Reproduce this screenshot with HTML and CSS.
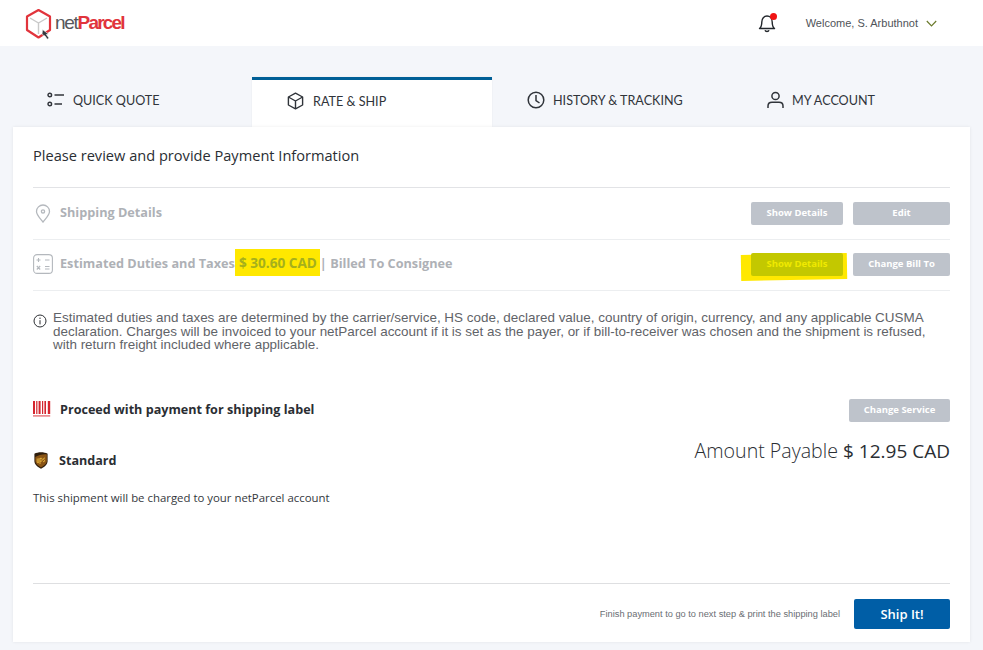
FILE: index.html
```html
<!DOCTYPE html>
<html lang="en">
<head>
  <meta charset="UTF-8" />
  <title>netParcel - Rate &amp; Ship</title>
  <link rel="stylesheet" href="styles.css">
</head>
<body>
  <header class="topbar">
    <a class="logo">
      <svg class="logo-mark" width="28" height="32" viewBox="0 0 28 32">
        <path d="M13.5 2 L25 8.5 V22 L13.5 29.5 L2 22 V8.5 Z" fill="none" stroke="#e1343c" stroke-width="2.2" stroke-linejoin="round"/>
        <path d="M5 10 L13.5 15 L22 10 M13.5 15 V26" fill="none" stroke="#c9c9c9" stroke-width="1.4"/>
        <path d="M17 26.5 L17.5 21.5 L23.5 26 L21.3 26.4 L24 30 L22.3 31.2 L20 28 Z" fill="#33373d" stroke="#fff" stroke-width=".6"/>
      </svg>
      <span class="logo-net">net</span><span class="logo-parcel">Parcel</span>
    </a>
    <div class="topbar-right">
      <span class="bell">
        <svg width="18" height="20" viewBox="0 0 18 20" fill="none" stroke="#23272c" stroke-width="1.4">
          <path d="M1.5 15.5 C3.5 14 3.8 12 3.8 9 C3.8 5.5 6 3 9 3 C12 3 14.2 5.5 14.2 9 C14.2 12 14.5 14 16.5 15.5 Z" stroke-linejoin="round"/>
          <path d="M7 17.3 C7.5 18.8 10.5 18.8 11 17.3"/>
        </svg>
        <i class="bell-dot"></i>
      </span>
      <span class="welcome">Welcome, S. Arbuthnot</span>
      <svg width="11" height="7" viewBox="0 0 11 7" fill="none" stroke="#6b7a2c" stroke-width="1.2"><path d="M.8 1 L5.5 5.8 L10.2 1"/></svg>
    </div>
  </header>

  <nav class="tabs">
    <div class="tab">
      <svg width="18" height="16" viewBox="0 0 18 16" fill="none" stroke="#30343a" stroke-width="1.4">
        <circle cx="2.8" cy="3" r="1.8"/><circle cx="2.8" cy="12" r="1.8"/>
        <path d="M7.5 3 H17 M7.5 12 H15"/>
      </svg>
      QUICK QUOTE
    </div>
    <div class="tab active">
      <svg width="17" height="18" viewBox="0 0 17 18" fill="none" stroke="#30343a" stroke-width="1.4" stroke-linejoin="round">
        <path d="M8.5 1.2 L15.6 5 V13 L8.5 16.8 L1.4 13 V5 Z"/>
        <path d="M1.4 5 L8.5 9 L15.6 5 M8.5 9 V16.8"/>
      </svg>
      RATE &amp; SHIP
    </div>
    <div class="tab">
      <svg width="18" height="18" viewBox="0 0 18 18" fill="none" stroke="#30343a" stroke-width="1.5">
        <circle cx="9" cy="9" r="7.8"/><path d="M9 4 V9.5 L12.5 12"/>
      </svg>
      HISTORY &amp; TRACKING
    </div>
    <div class="tab">
      <svg width="17" height="18" viewBox="0 0 17 18" fill="none" stroke="#30343a" stroke-width="1.5">
        <circle cx="8.5" cy="5" r="3.6"/><path d="M1 17 V15 C1 12.5 3 11.3 5 11.3 H12 C14 11.3 16 12.5 16 15 V17"/>
      </svg>
      MY ACCOUNT
    </div>
  </nav>

  <main class="card">
    <h1 class="page-title">Please review and provide Payment Information</h1>

    <div class="row">
      <div class="row-label">
        <svg class="row-icon" width="15" height="19" viewBox="0 0 15 19" fill="none" stroke="#b4b8bd" stroke-width="1.3">
          <path d="M7.5 18 C4 13.5 1 10.8 1 7.4 C1 3.8 4 1 7.5 1 C11 1 14 3.8 14 7.4 C14 10.8 11 13.5 7.5 18 Z"/>
          <circle cx="7.5" cy="7.4" r="1.6"/>
        </svg>
        <span class="row-text">Shipping Details</span>
      </div>
      <div class="row-actions">
        <button class="btn btn-details">Show Details</button>
        <button class="btn btn-side">Edit</button>
      </div>
    </div>

    <div class="row row-short">
      <div class="row-label">
        <svg class="row-icon" width="20" height="20" viewBox="0 0 20 20" fill="none" stroke="#b4b8bd" stroke-width="1.1">
          <rect x=".6" y=".6" width="18.8" height="18.8" rx="3.5"/>
          <path d="M3.5 6 H7.5 M5.5 4 V8 M12 6 H16.5 M3.8 12 L7.2 15.5 M7.2 12 L3.8 15.5 M12 12.5 H16.5 M12 15 H16.5"/>
        </svg>
        <span class="row-text">Estimated Duties and Taxes<mark class="marker-text">$ 30.60 CAD</mark>| Billed To Consignee</span>
      </div>
      <div class="row-actions">
        <span class="marker-btn"></span>
        <button class="btn btn-details btn-marked">Show Details</button>
        <button class="btn btn-side">Change Bill To</button>
      </div>
    </div>

    <div class="notice">
      <svg class="notice-icon" width="14" height="14" viewBox="0 0 14 14" fill="none" stroke="#2c2f33" stroke-width="1">
        <circle cx="7" cy="7" r="6"/><path d="M7 6.2 V10.4 M7 3.6 V5"/>
      </svg>
      <p>Estimated duties and taxes are determined by the carrier/service, HS code, declared value, country of origin, currency, and any applicable CUSMA declaration. Charges will be invoiced to your netParcel account if it is set as the payer, or if bill-to-receiver was chosen and the shipment is refused, with return freight included where applicable.</p>
    </div>

    <section class="payment">
      <div class="payment-left">
        <div class="proceed">
          <svg width="18" height="16" viewBox="0 0 18 16" fill="#d5262f">
            <rect x="0" y="0" width="2" height="13"/><rect x="3.2" y="0" width="1.2" height="13"/><rect x="5.6" y="0" width="2" height="13"/><rect x="9" y="0" width="1.2" height="13"/><rect x="11.4" y="0" width="1.6" height="13"/><rect x="14.8" y="0" width="2.4" height="13"/>
            <rect x="0" y="14.2" width="17.2" height="1.4" opacity=".65"/>
          </svg>
          Proceed with payment for shipping label
        </div>
        <div class="service">
          <svg class="ups" width="14" height="17" viewBox="0 0 14 17">
            <path d="M7 .3 C9.5 .3 11.8 .8 13.6 1.8 V9 C13.6 12.5 10.5 15 7 16.7 C3.5 15 .4 12.5 .4 9 V1.8 C2.2 .8 4.5 .3 7 .3 Z" fill="#2e1d0c"/>
            <path d="M1.3 5 C4 3 9.5 1.8 12.8 2.3 V9 C12.8 11.5 10 13.8 7 15.4 C4 13.8 1.3 11.5 1.3 9 Z" fill="#8a5414"/>
            <path d="M3.2 6.5 V10 C3.2 11 4.8 11 4.8 10 V6.3 M6 6 V12 M6 6.5 C7.6 5.6 8.4 6.6 8.2 8 C8 9.4 7 9.6 6 9 M11 6.2 C9.6 5.6 8.9 7.2 10 7.9 C11.1 8.6 10.6 10.2 9 9.6" fill="none" stroke="#f6c445" stroke-width=".8"/>
          </svg>
          Standard
        </div>
        <p class="charged">This shipment will be charged to your netParcel account</p>
      </div>
      <div class="payment-right">
        <button class="btn btn-service">Change Service</button>
        <div class="amount">Amount Payable <strong>$ 12.95 CAD</strong></div>
      </div>
    </section>

    <footer class="card-footer">
      <span class="finish">Finish payment to go to next step &amp; print the shipping label</span>
      <button class="ship">Ship It!</button>
    </footer>
  </main>
</body>
</html>
```

FILE: styles.css
```css
* {
  box-sizing: border-box;
}
html, body {
  height: 650px;
  overflow: hidden;
}
body {
  margin: 0;
  background: #f4f6fa;
  color: #2a2e33;
  font-family: 'Open Sans', sans-serif;
}

.topbar {
  height: 46px;
  background: #fff;
  display: flex;
  align-items: center;
  justify-content: space-between;
  padding: 0 46px 0 25px;
}
.logo {
  display: flex;
  align-items: center;
  font-family: 'Liberation Sans', sans-serif;
  font-size: 19px;
  letter-spacing: -1.3px;
}
.logo-mark {
  margin-right: 2px;
  margin-top: 2px;
}
.logo-net {
  color: #55585c;
}
.logo-parcel {
  color: #e1343c;
  font-weight: 700;
  letter-spacing: -1.8px;
}
.topbar-right {
  display: flex;
  align-items: center;
}
.bell {
  position: relative;
  display: flex;
  margin-right: 30px;
}
.bell-dot {
  position: absolute;
  top: 0;
  right: -1px;
  width: 7px;
  height: 7px;
  background: #f01414;
  border-radius: 50%;
}
.welcome {
  font-family: 'Liberation Sans', sans-serif;
  font-size: 11px;
  color: #4f5358;
  margin-right: 8px;
}

.tabs {
  display: grid;
  grid-template-columns: repeat(4, 240px);
  margin: 31px 0 0 12px;
  height: 50px;
}
.tab {
  display: flex;
  align-items: center;
  gap: 8px;
  padding: 0 0 4px 35px;
  font-family: Lato, sans-serif;
  font-size: 12.6px;
  color: #30343a;
}
.tab.active {
  background: #fff;
  border-top: 3px solid #005f96;
  padding: 0 0 5px 35px;
  gap: 9px;
  box-shadow: 0 0 2px rgba(0, 0, 0, 0.05);
}

.card {
  position: relative;
  margin: 0 13px;
  width: 957px;
  height: 515px;
  background: #fff;
  padding: 0 20px;
  box-shadow: 0 0 3px rgba(0, 0, 0, 0.08);
  display: flex;
  flex-direction: column;
}
.page-title {
  margin: 0;
  height: 61px;
  display: flex;
  align-items: center;
  padding-bottom: 5px;
  font-size: 14.6px;
  font-weight: 400;
  color: #2a2e33;
  border-bottom: 1px solid #e2e3e6;
}

.row {
  height: 52px;
  display: flex;
  align-items: center;
  justify-content: space-between;
  border-bottom: 1px solid #eceef0;
}
.row-short {
  height: 51px;
  padding-bottom: 2px;
}
.row-label {
  display: flex;
  align-items: center;
  font-size: 12.7px;
  font-weight: 700;
  color: #aeb1b6;
}
.row-text {
  margin-bottom: 4px;
}
.row-icon {
  width: 20px;
  margin-right: 7px;
}
.row-actions {
  position: relative;
  display: flex;
  gap: 10px;
}
.btn {
  border: none;
  border-radius: 2px;
  color: #fff;
  background: #bec3cb;
  font-family: 'Open Sans', sans-serif;
  font-size: 9.5px;
  font-weight: 700;
  height: 23px;
  padding: 0 0 2px;
}
.btn-details {
  width: 92px;
}
.btn-side {
  width: 97px;
}
.btn-service {
  width: 101px;
}
.btn-marked {
  position: relative;
  background: #c3c800;
  color: #f0ea00;
}
.marker-btn {
  position: absolute;
  left: -10px;
  top: 1px;
  width: 106px;
  height: 26px;
  background: #ffe800;
  transform: rotate(-1deg);
}
.marker-text {
  background: #ffe800;
  color: #a5b01c;
  padding: 4px 3px 4px 4px;
  font-size: 13.6px;
}

.notice {
  display: flex;
  gap: 6px;
  margin-top: 20px;
}
.notice-icon {
  flex: none;
  margin-top: 3px;
}
.notice p {
  margin: 0;
  font-family: 'Liberation Sans', sans-serif;
  font-size: 13.45px;
  line-height: 13.5px;
  color: #5f6368;
}

.payment {
  display: flex;
  justify-content: space-between;
  margin-top: 47px;
}
.proceed, .service {
  display: flex;
  align-items: center;
  font-size: 12.6px;
  font-weight: 700;
  color: #2a2e33;
}
.proceed {
  gap: 9px;
  height: 21px;
}
.service {
  gap: 11px;
  margin-top: 32px;
  height: 18px;
}
.ups {
  margin-left: 1px;
}
.charged {
  margin: 20px 0 0;
  font-size: 11.4px;
  color: #34383d;
}
.payment-right {
  display: flex;
  flex-direction: column;
  align-items: flex-end;
}
.amount {
  margin-top: 15px;
  font-size: 19.6px;
  font-weight: 300;
  color: #2a2e33;
}
.amount strong {
  font-size: 19px;
  font-weight: 500;
}

.card-footer {
  margin-top: auto;
  margin-bottom: 13px;
  padding-top: 15px;
  border-top: 1px solid #dedfe1;
  display: flex;
  align-items: center;
  justify-content: flex-end;
  gap: 14px;
}
.finish {
  font-family: 'Liberation Sans', sans-serif;
  font-size: 9.25px;
  color: #6a6e73;
}
.ship {
  width: 96px;
  height: 30px;
  border: none;
  border-radius: 2px;
  background: #005ea6;
  color: #fff;
  font-family: 'Open Sans', sans-serif;
  font-size: 13px;
  font-weight: 600;
}
```
